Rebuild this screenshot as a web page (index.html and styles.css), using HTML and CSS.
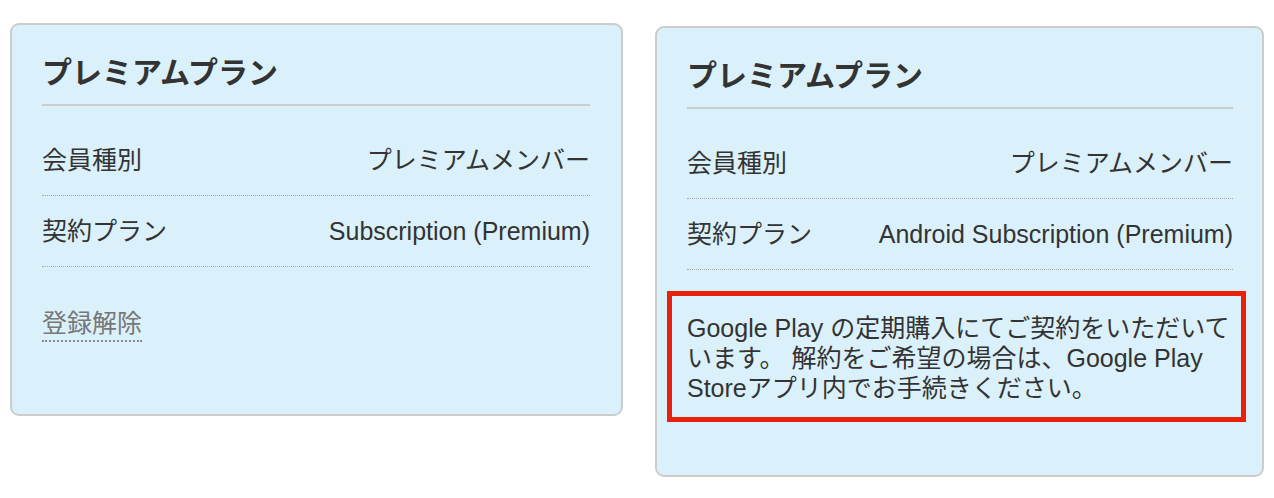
FILE: index.html
```html
<!DOCTYPE html>
<html lang="ja">
<head>
    <meta charset="UTF-8">
    <meta name="viewport" content="width=device-width, initial-scale=1.0">
    <title>プレミアムプラン</title>
    <link rel="stylesheet" href="styles.css">
</head>
<body>
    <div class="plan-grid">
        <section class="plan-card">
            <h2 class="plan-title">プレミアムプラン</h2>
            <div class="plan-row">
                <span class="plan-label">会員種別</span>
                <span class="plan-value">プレミアムメンバー</span>
            </div>
            <div class="plan-row">
                <span class="plan-label">契約プラン</span>
                <span class="plan-value">Subscription (Premium)</span>
            </div>
            <div class="plan-action">
                <a href="#" class="cancel-link">登録解除</a>
            </div>
        </section>

        <section class="plan-card plan-card-android">
            <h2 class="plan-title">プレミアムプラン</h2>
            <div class="plan-row">
                <span class="plan-label">会員種別</span>
                <span class="plan-value">プレミアムメンバー</span>
            </div>
            <div class="plan-row">
                <span class="plan-label">契約プラン</span>
                <span class="plan-value">Android Subscription (Premium)</span>
            </div>
            <p class="plan-note">Google Play の定期購入にてご契約をいただいています。 解約をご希望の場合は、Google Play Storeアプリ内でお手続きください。</p>
        </section>
    </div>
</body>
</html>
```

FILE: styles.css
```css
/* Global */
body {
    margin: 0;
    font-family: 'Liberation Sans', 'Noto Sans CJK JP', sans-serif;
    color: #333333;
    background-color: #FFFFFF;
}

.plan-grid {
    display: grid;
    grid-template-columns: 613px 609px;
    gap: 32px;
    align-items: start;
    padding: 23px 10px 0;
}

/* Card */
.plan-card {
    background-color: #DAF0FA;
    border: 2px solid #CCCCCC;
    border-radius: 9px;
    padding: 27px 31px 30px 30px;
}

.plan-card-android {
    margin-top: 3px;
    padding-right: 29px;
}

.plan-title {
    margin: 0;
    font-size: 30px;
    line-height: 42px;
    font-weight: 700;
    color: #333333;
    padding-bottom: 10px;
    border-bottom: 2px solid #CCCCCC;
}

.plan-title + .plan-row {
    margin-top: 19px;
}

.plan-row {
    display: flex;
    justify-content: space-between;
    align-items: center;
    padding: 20px 0;
    font-size: 25px;
    line-height: 30px;
    border-bottom: 1px dotted #A0A8AC;
}

/* Link Registrasi */
.plan-action {
    margin: 41px 0 42px;
    line-height: 30px;
}

.cancel-link {
    display: inline-block;
    font-size: 25px;
    color: #777777;
    text-decoration: none;
    padding-bottom: 2px;
    border-bottom: 2px dotted #8A8A8A;
}

/* Catatan Google Play */
.plan-note {
    position: relative;
    margin: 43px 0 42px;
    font-size: 25px;
    line-height: 30px;
    color: #333333;
}

.plan-note::after {
    content: "";
    position: absolute;
    top: -22px;
    bottom: -19px;
    left: -20px;
    right: -13px;
    border: 5px solid #E8200C;
}
```
